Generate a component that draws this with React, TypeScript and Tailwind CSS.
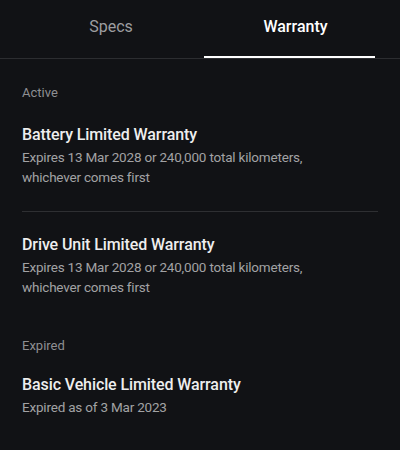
import { useState } from "react";

type Warranty = { title: string; detail: string };

const ACTIVE: Warranty[] = [
  {
    title: "Battery Limited Warranty",
    detail: "Expires 13 Mar 2028 or 240,000 total kilometers, whichever comes first",
  },
  {
    title: "Drive Unit Limited Warranty",
    detail: "Expires 13 Mar 2028 or 240,000 total kilometers, whichever comes first",
  },
];

const EXPIRED: Warranty[] = [
  { title: "Basic Vehicle Limited Warranty", detail: "Expired as of 3 Mar 2023" },
];

function WarrantyItem({ item }: { item: Warranty }) {
  return (
    <div>
      <h3 className="text-[16px] leading-[24px] tracking-[-0.1px] font-medium text-[#eeeeee]">{item.title}</h3>
      <p className="text-[13.5px] leading-[20px] tracking-[-0.2px] text-[#a2a2a4] max-w-[300px]">
        {item.detail}
      </p>
    </div>
  );
}

export default function App() {
  const [tab, setTab] = useState<"specs" | "warranty">("warranty");

  return (
    <div
      className="min-h-[450px] w-[400px] bg-[#111215]"
      style={{ fontFamily: "Roboto, 'Noto Sans', sans-serif" }}
    >
      <div className="flex h-[59px] border-b border-[#2c2d30] pl-[18px]">
        {(["specs", "warranty"] as const).map((t) => (
          <button
            key={t}
            type="button"
            onClick={() => setTab(t)}
            className={`relative flex justify-center pt-[16px] text-[16px] leading-[22px] ${
              t === "specs" ? "w-[186px]" : "w-[171px] pl-[12px]"
            } ${tab === t ? "font-medium text-white" : "text-[#9d9ea0]"}`}
          >
            {t === "specs" ? "Specs" : "Warranty"}
            {tab === t && <span className="absolute bottom-0 left-0 right-0 h-[2px] bg-white" />}
          </button>
        ))}
      </div>

      <div className="px-[22px] pt-[24px]">
        <div className="text-[13px] leading-[20px] text-[#8e8f92]">Active</div>
        <div className="mt-[20px]">
          <WarrantyItem item={ACTIVE[0]} />
        </div>
        <div className="mt-[24px] h-px bg-[#2e2f32]" />
        <div className="mt-[21px]">
          <WarrantyItem item={ACTIVE[1]} />
        </div>

        <div className="mt-[39px] text-[13px] leading-[20px] text-[#8e8f92]">Expired</div>
        <div className="mt-[17px]">
          <WarrantyItem item={EXPIRED[0]} />
        </div>
      </div>
    </div>
  );
}
